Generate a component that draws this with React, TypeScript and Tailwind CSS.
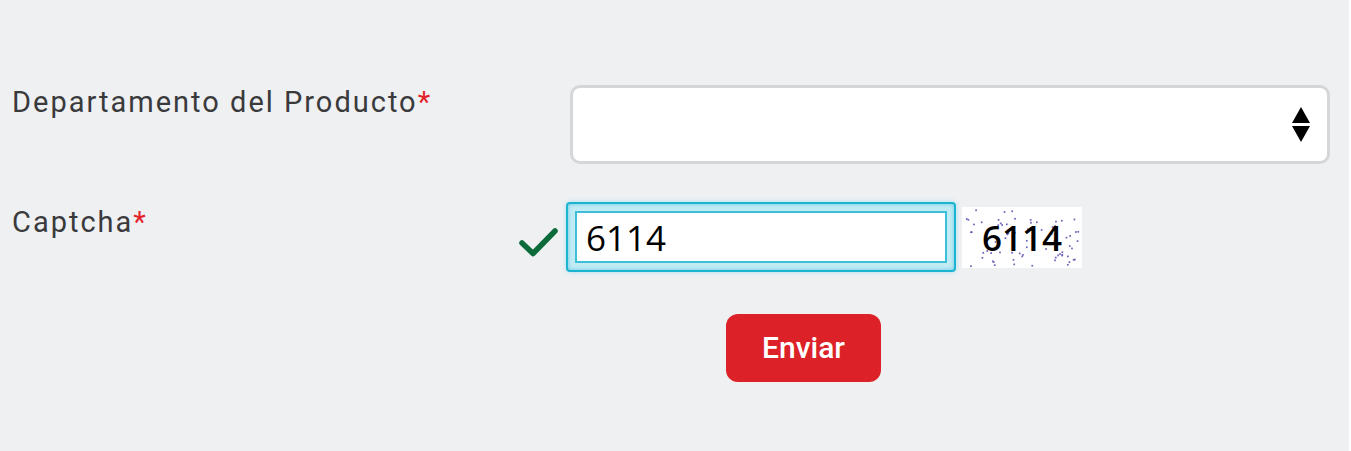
import { useMemo } from "react";

const label = "font-['Roboto',sans-serif] text-[29px] leading-none tracking-[2px] text-[#3a3a3c]";

const CaptchaImage = () => {
  // fixed noise so the picture is the same on every run
  const dots = useMemo(() => {
    let a = 123456789;
    const rnd = () => {
      a = (a + 0x6d2b79f5) | 0;
      let t = Math.imul(a ^ (a >>> 15), 1 | a);
      t = (t + Math.imul(t ^ (t >>> 7), 61 | t)) ^ t;
      return ((t ^ (t >>> 14)) >>> 0) / 4294967296;
    };
    return Array.from({ length: 75 }, () => ({ x: rnd() * 116 + 2, y: rnd() * 57 + 2 }));
  }, []);

  return (
    <div className="relative w-[120px] h-[61px] bg-white flex items-center justify-center">
      <svg className="absolute inset-0" width="120" height="61">
        {dots.map((d, i) => (
          <rect key={i} x={d.x} y={d.y} width="1.7" height="1.7" fill="#6b62b5" />
        ))}
      </svg>
      <span className="relative font-['Open_Sans',sans-serif] font-semibold text-[35px] leading-none text-black">
        6114
      </span>
    </div>
  );
};

export default function App() {
  return (
    <div className="h-[451px] w-full bg-white">
      <div className="h-full w-[1349px] bg-[#eff0f2] pt-[85px]">
        {/* Departamento */}
        <div className="flex items-start">
          <div className="w-[570px] pl-3 pt-[3px]">
            <span className={label}>
              Departamento del Producto<span className="text-[#e3242b]">*</span>
            </span>
          </div>
          <div className="w-[760px] h-[79px] bg-white border-[3px] border-[#d5d6d8] rounded-[10px] flex items-center justify-end pr-[17px]">
            <svg width="18" height="36" viewBox="0 0 18 36">
              <polygon points="9,0 18,16 0,16" fill="#000" />
              <polygon points="0,19 18,19 9,35" fill="#000" />
            </svg>
          </div>
        </div>

        {/* Captcha */}
        <div className="flex items-start mt-[38px]">
          <div className="w-[518px] pl-3 pt-[6px]">
            <span className={label}>
              Captcha<span className="text-[#e3242b]">*</span>
            </span>
          </div>
          <svg className="mt-[24px]" width="40" height="32" viewBox="0 0 40 32">
            <path d="M4 17 L15 27.5 L37 5" fill="none" stroke="#0b6b3a" strokeWidth="5.5" strokeLinecap="round" strokeLinejoin="round" />
          </svg>
          <div className="ml-[8px] w-[390px] h-[70px] rounded-[4px] border-2 border-[#1db4d1] bg-[#c3ebf4] p-[7px] shadow-[0_0_5px_#a9e1ee,inset_0_0_4px_#66cbe1]">
            <div className="h-full w-full border-2 border-[#3cc0da] bg-white flex items-center pl-[9px]">
              <span className="font-['Open_Sans',sans-serif] text-[35px] leading-none text-black">6114</span>
            </div>
          </div>
          <div className="ml-[6px] mt-[5px]">
            <CaptchaImage />
          </div>
        </div>

        {/* Enviar */}
        <div className="mt-[42px] pl-[726px]">
          <button className="w-[155px] h-[68px] rounded-[12px] bg-[#dc2128] text-white font-['Roboto',sans-serif] font-medium text-[30px] leading-none">
            Enviar
          </button>
        </div>
      </div>
    </div>
  );
}
